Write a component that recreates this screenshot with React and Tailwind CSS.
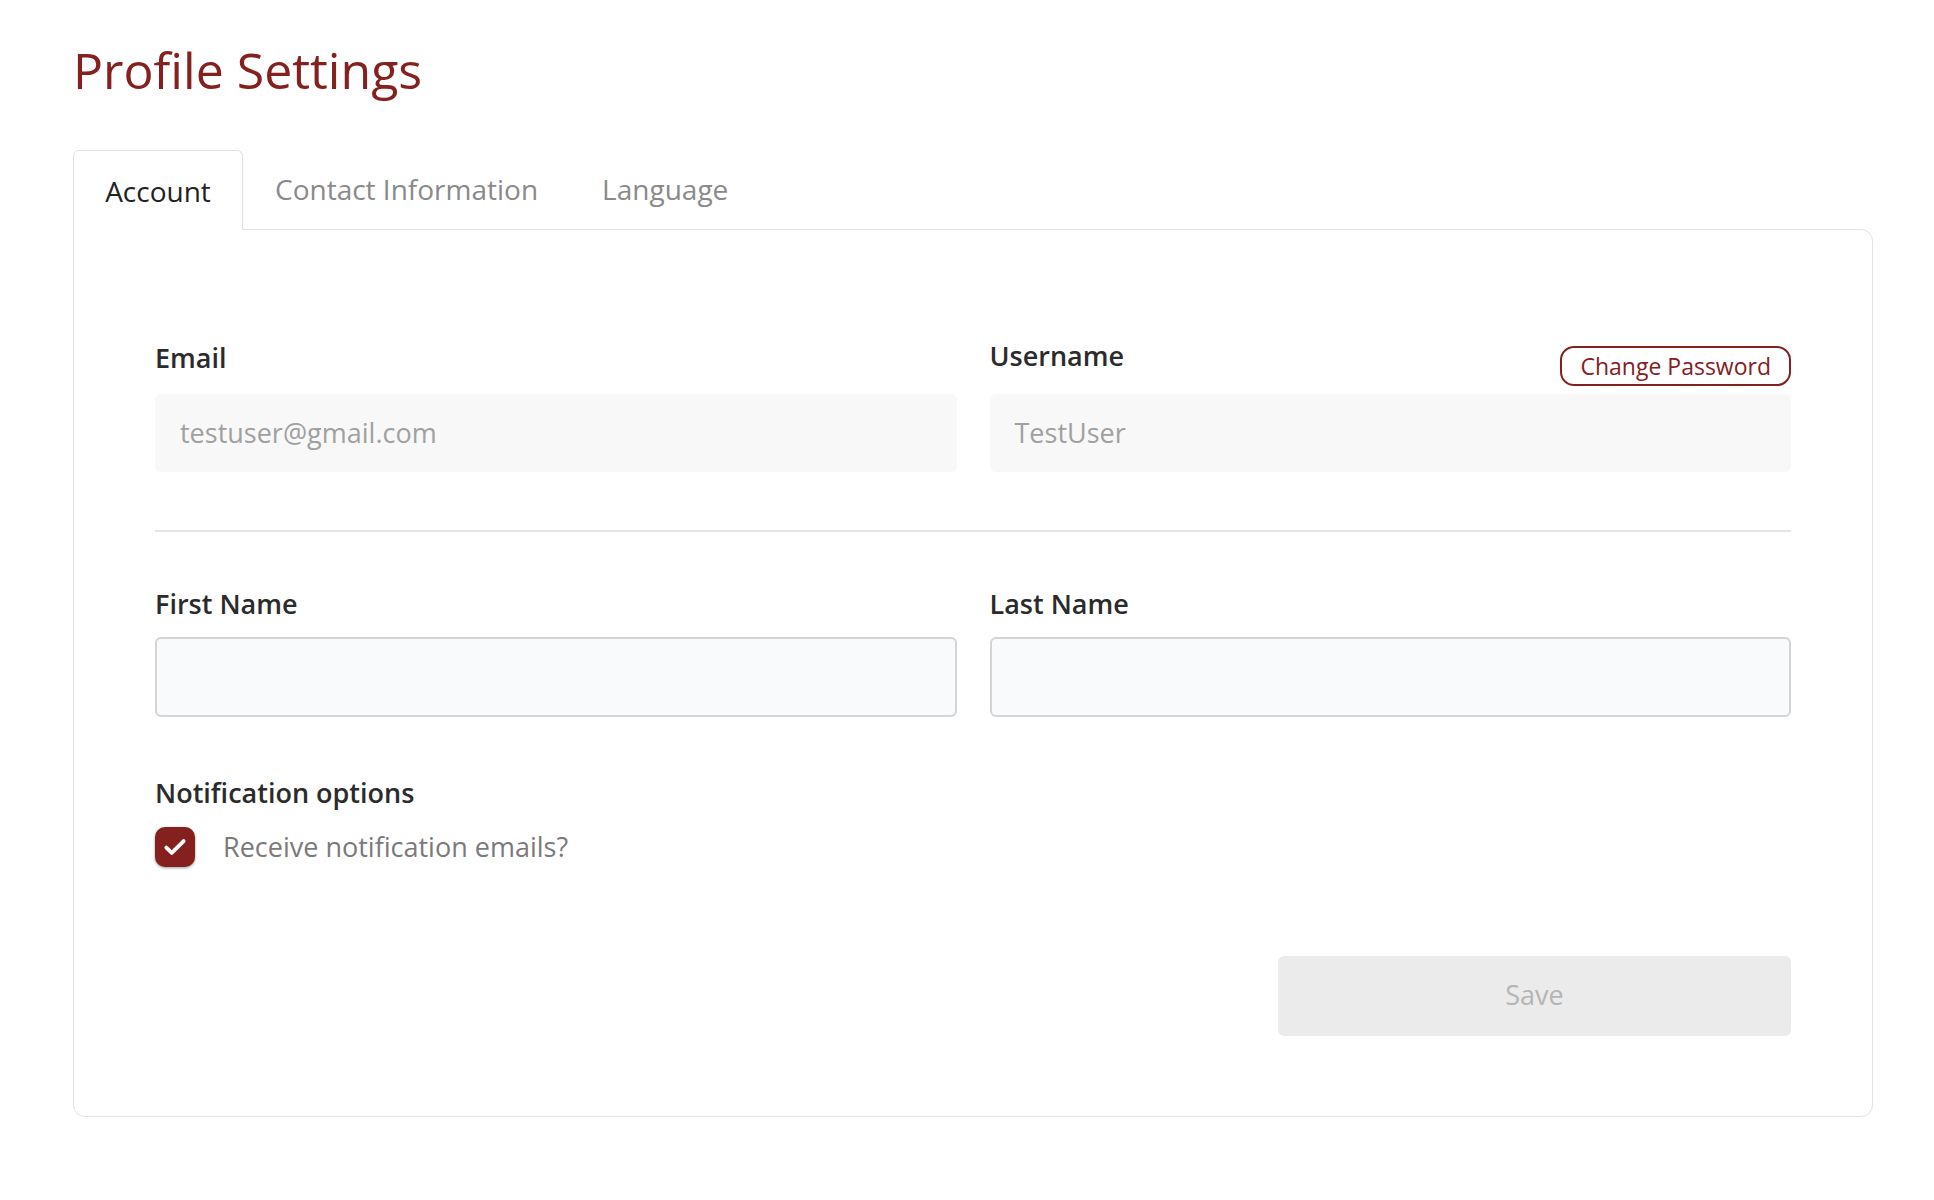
export default function App() {
  return (
    <div className="min-h-screen bg-white px-[73px] pt-[36px]" style={{ fontFamily: '"Open Sans", sans-serif' }}>
      <h1 className="text-[50px] leading-[68px] text-[#84201e]">Profile Settings</h1>
      <div className="mt-[45px] flex items-end">
        <div className="flex h-[80px] w-[170px] items-center justify-center rounded-t-md border border-b-0 border-[#e2e2e2] bg-white text-[28px] text-[#222] relative top-px">Account</div>
        <div className="flex h-[80px] items-center px-[32px] text-[28px] text-[#8a8a8a]">Contact Information</div>
        <div className="flex h-[80px] items-center px-[32px] text-[28px] text-[#8a8a8a]">Language</div>
      </div>
      <div className="w-[1800px] rounded-b-xl rounded-tr-xl border border-[#e2e2e2] px-[81px] pt-[112px] pb-[80px]">
        <div className="grid grid-cols-2 gap-x-[33px]">
          <div>
            <div className="flex h-[36px] items-end text-[27px] font-semibold text-[#2b2b2b]">Email</div>
            <div className="mt-[16px] flex h-[78px] items-center rounded-md bg-[#f8f8f8] px-[25px] text-[27px] text-[#a0a0a0]">testuser@gmail.com</div>
          </div>
          <div>
            <div className="flex h-[36px] items-center justify-between">
              <span className="text-[27px] font-semibold text-[#2b2b2b] relative -top-[4px]">Username</span>
              <button className="flex h-[40px] items-center rounded-[14px] border-2 border-[#84201e] px-[18px] text-[23px] text-[#84201e] relative top-[6px]">Change Password</button>
            </div>
            <div className="mt-[16px] flex h-[78px] items-center rounded-md bg-[#f8f8f8] px-[25px] text-[27px] text-[#a0a0a0]">TestUser</div>
          </div>
        </div>
        <div className="mt-[58px] h-[2px] bg-[#e6e6e6]"></div>
        <div className="mt-[52px] grid grid-cols-2 gap-x-[33px]">
          <div>
            <div className="text-[27px] font-semibold text-[#2b2b2b]">First Name</div>
            <div className="mt-[12px] h-[80px] rounded-md border-2 border-[#d4d4d4] bg-[#f9fafb]"></div>
          </div>
          <div>
            <div className="text-[27px] font-semibold text-[#2b2b2b]">Last Name</div>
            <div className="mt-[12px] h-[80px] rounded-md border-2 border-[#d4d4d4] bg-[#f9fafb]"></div>
          </div>
        </div>
        <div className="mt-[56px] text-[27px] font-semibold text-[#2b2b2b]">Notification options</div>
        <div className="mt-[14px] flex items-center gap-[28px]">
          <div className="flex h-[40px] w-[40px] items-center justify-center rounded-[10px] bg-[#84201e] shadow-[0_1px_3px_rgba(0,0,0,0.4)]">
            <svg width="26" height="26" viewBox="0 0 24 24" fill="none" stroke="white" strokeWidth="3.5" strokeLinecap="round" strokeLinejoin="round">
              <path d="M4 12.5l5 5L20 6.5" />
            </svg>
          </div>
          <span className="text-[27px] text-[#7a7a7a]">Receive notification emails?</span>
        </div>
        <div className="mt-[88px] flex justify-end">
          <button className="h-[80px] w-[513px] rounded-md bg-[#ebebeb] text-[27px] text-[#b5b5b5]">Save</button>
        </div>
      </div>
    </div>
  );
}
